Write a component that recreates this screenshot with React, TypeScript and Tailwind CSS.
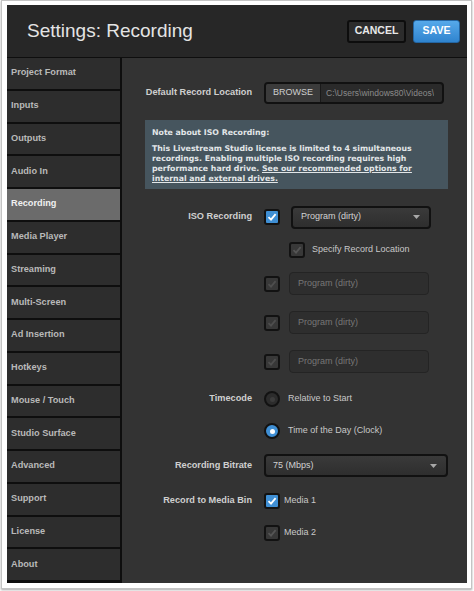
import React from "react";

const NAV = [
  "Project Format",
  "Inputs",
  "Outputs",
  "Audio In",
  "Recording",
  "Media Player",
  "Streaming",
  "Multi-Screen",
  "Ad Insertion",
  "Hotkeys",
  "Mouse / Touch",
  "Studio Surface",
  "Advanced",
  "Support",
  "License",
  "About",
];

const labelFont = { fontFamily: "'Liberation Sans', Arial, sans-serif" };
const noteFont = { fontFamily: "'DejaVu Sans', Verdana, sans-serif" };

function Check({ on, disabled }: { on?: boolean; disabled?: boolean }) {
  const bg = on ? "bg-[#3f8fd4]" : "bg-[#383838]";
  const stroke = on ? "#ffffff" : disabled ? "#4e4e4e" : "#555555";
  return (
    <div
      className={`flex h-[16px] w-[16px] shrink-0 items-center justify-center rounded-[3px] border-2 border-[#121212] ${bg}`}
    >
      <svg width="10" height="10" viewBox="0 0 10 10">
        <path d="M1.5 5.2 L4 7.6 L8.6 2.2" fill="none" stroke={stroke} strokeWidth="1.8" />
      </svg>
    </div>
  );
}

function Radio({ on }: { on?: boolean }) {
  return (
    <div
      className={`flex h-[16px] w-[16px] shrink-0 items-center justify-center rounded-full border-2 border-[#121212] ${
        on ? "bg-[#3f8fd4]" : "bg-[#2c2c2c]"
      }`}
    >
      <div className={`h-[5px] w-[5px] rounded-full ${on ? "bg-white" : "bg-[#3c3c3c]"}`} />
    </div>
  );
}

function Caret() {
  return (
    <svg width="7" height="4" viewBox="0 0 7 4">
      <path d="M0 0 H7 L3.5 4 Z" fill="#a8a8a8" />
    </svg>
  );
}

function Label({ children }: { children: React.ReactNode }) {
  return (
    <div
      className="w-[131px] shrink-0 pr-[1px] text-right text-[9.2px] font-bold text-[#cfcfcf]"
      style={labelFont}
    >
      {children}
    </div>
  );
}

export default function App() {
  return (
    <div className="h-[591px] w-[474px] bg-white" style={labelFont}>
      <div className="ml-[1px] h-[589px] w-[471px] border border-[#c4c4c4] bg-white pb-[5px] pl-[5px] pr-[3px] pt-[4px] shadow-[0_1px_2px_rgba(0,0,0,0.35)]">
        <div className="flex h-[578px] w-[460px] flex-col bg-[#333333]">
          {/* header */}
          <div className="flex h-[53px] shrink-0 items-center border-b-[1px] border-[#0e0e0e] bg-[#272727] pl-[20px] pr-[7px]">
            <div className="flex-1 text-[19px] text-[#e4e4e4]">Settings: Recording</div>
            <button className="mr-[7px] h-[23px] w-[59px] rounded-[3px] border-2 border-[#0d0d0d] bg-[#2c2c2c] text-[10.5px] font-bold text-[#e8e8e8]">
              CANCEL
            </button>
            <button className="h-[23px] w-[47px] rounded-[3px] border border-[#2466a3] bg-gradient-to-b from-[#56a9ea] to-[#2f84cf] text-[10.5px] font-bold text-white">
              SAVE
            </button>
          </div>

          <div className="flex min-h-0 flex-1">
            {/* sidebar */}
            <div className="w-[115px] shrink-0 border-r-2 border-[#0e0e0e] bg-[#0e0e0e]">
              {NAV.map((n) => (
                <div
                  key={n}
                  className={`flex h-[32.75px] items-center border-b-2 border-[#0e0e0e] pl-[4px] text-[9.2px] font-bold ${
                    n === "Recording" ? "bg-[#6b6b6b] text-[#f0f0f0]" : "bg-[#2d2d2d] text-[#b9b9b9]"
                  }`}
                >
                  {n}
                </div>
              ))}
            </div>

            {/* main */}
            <div className="flex flex-1 flex-col">
              <div className="mt-[24px] flex h-[22px] items-center gap-[11px]">
                <Label>Default Record Location</Label>
                <div className="flex h-[22px] w-[180px] overflow-hidden rounded-[4px] border-2 border-[#111111] bg-[#2a2a2a]">
                  <div className="flex w-[55px] shrink-0 items-center justify-center border-r border-[#1a1a1a] bg-[#3b3b3b] text-[9px] text-[#cfcfcf]">
                    BROWSE
                  </div>
                  <div className="flex items-center overflow-hidden whitespace-nowrap pl-[5px] text-[8.5px] text-[#8a8a8a]">
                    C:\Users\windows80\Videos\
                  </div>
                </div>
              </div>

              <div
                className="ml-[23px] mt-[16px] h-[69px] w-[303px] bg-[#46555e] pl-[7px] pr-[14px] pt-[8px] text-[7.8px] font-bold leading-[10px] text-[#e2e6e8]"
                style={noteFont}
              >
                <div className="mb-[6px]">Note about ISO Recording:</div>
                <div>
                  This Livestream Studio license is limited to 4 simultaneous recordings. Enabling multiple ISO
                  recording requires high performance hard drive.{" "}
                  <span className="underline">See our recommended options for internal and external drives.</span>
                </div>
              </div>

              {/* ISO */}
              <div className="mt-[17px] flex h-[22px] items-center gap-[11px]">
                <Label>ISO Recording</Label>
                <Check on />
                <div className="flex h-[23px] w-[140px] items-center justify-between rounded-[4px] border-2 border-[#111111] bg-gradient-to-b from-[#3a3a3a] to-[#2e2e2e] pl-[8px] pr-[9px] text-[9px] text-[#d2d2d2]">
                  <span>Program (dirty)</span>
                  <Caret />
                </div>
              </div>

              <div className="ml-[167px] mt-[14px] flex h-[16px] items-center gap-[7px]">
                <Check />
                <span className="text-[9px] text-[#c8c8c8]">Specify Record Location</span>
              </div>

              {[0, 1, 2].map((i) => (
                <div key={i} className={`ml-[142px] flex h-[23px] items-center ${i === 0 ? "mt-[14px]" : "mt-[16px]"}`}>
                  <Check disabled />
                  <div className="ml-[9px] flex h-[23px] w-[140px] items-center rounded-[4px] border border-[#242424] bg-[#2e2e2e] pl-[8px] text-[9px] text-[#777777]">
                    Program (dirty)
                  </div>
                </div>
              ))}

              {/* timecode */}
              <div className="mt-[18px] flex h-[16px] items-center gap-[11px]">
                <Label>Timecode</Label>
                <Radio />
                <span className="ml-[-3px] text-[9px] text-[#c8c8c8]">Relative to Start</span>
              </div>
              <div className="ml-[142px] mt-[16px] flex h-[16px] items-center gap-[8px]">
                <Radio on />
                <span className="text-[9px] text-[#c8c8c8]">Time of the Day (Clock)</span>
              </div>

              <div className="mt-[15px] flex h-[23px] items-center gap-[11px]">
                <Label>Recording Bitrate</Label>
                <div className="flex h-[23px] w-[184px] items-center justify-between rounded-[4px] border-2 border-[#111111] bg-gradient-to-b from-[#3a3a3a] to-[#2e2e2e] pl-[7px] pr-[9px] text-[9px] text-[#d2d2d2]">
                  <span>75 (Mbps)</span>
                  <Caret />
                </div>
              </div>

              <div className="mt-[16px] flex h-[16px] items-center gap-[11px]">
                <Label>Record to Media Bin</Label>
                <Check on />
                <span className="ml-[-7px] text-[9px] text-[#c8c8c8]">Media 1</span>
              </div>
              <div className="ml-[142px] mt-[16px] flex h-[16px] items-center gap-[4px]">
                <Check />
                <span className="text-[9px] text-[#c8c8c8]">Media 2</span>
              </div>
            </div>
          </div>
        </div>
      </div>
    </div>
  );
}
